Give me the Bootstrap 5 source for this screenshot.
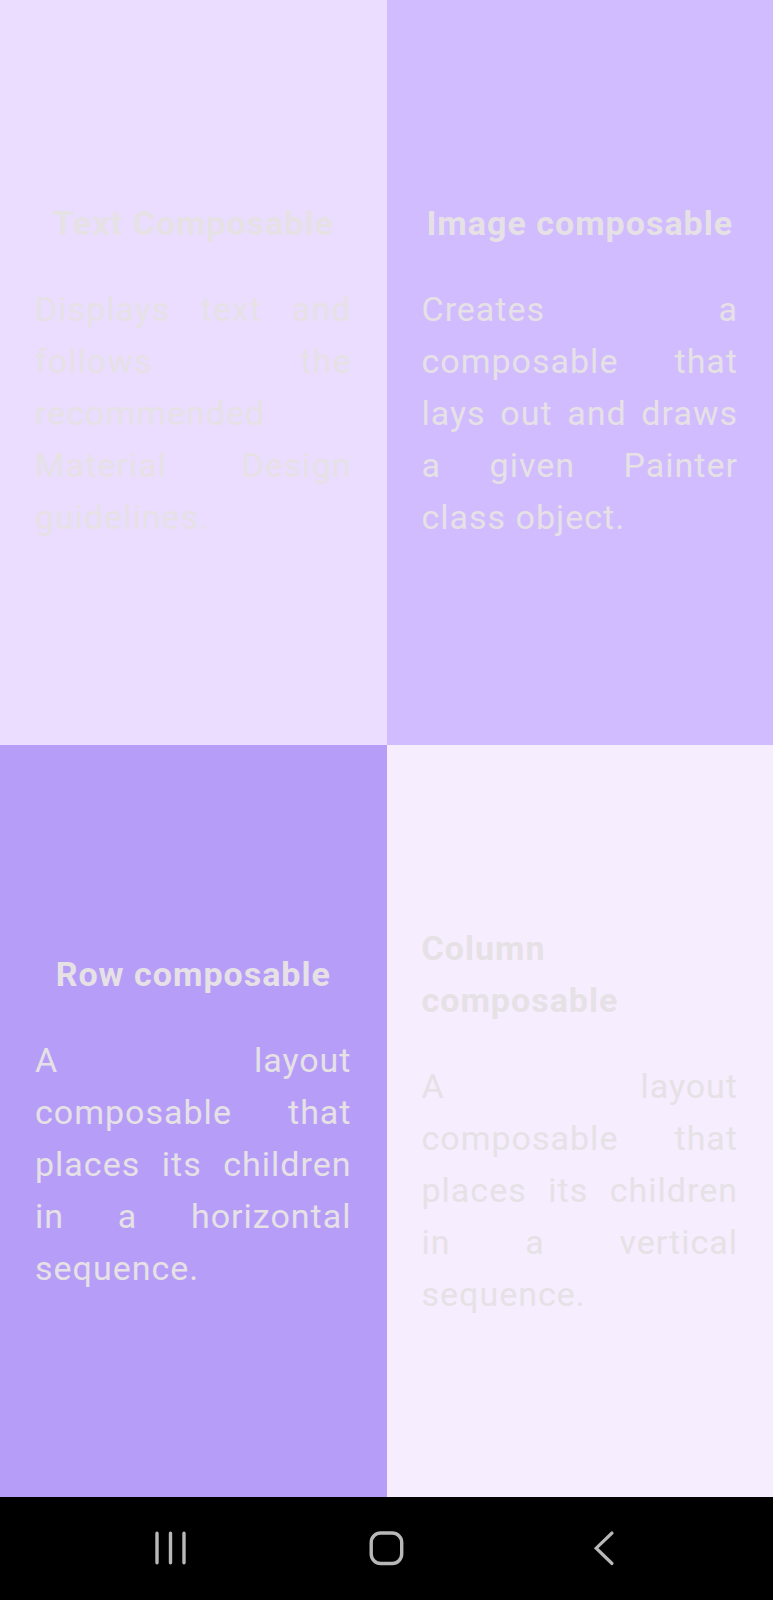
<!DOCTYPE html>
<html lang="en">
<head>
<meta charset="utf-8">
<meta name="viewport" content="width=device-width, initial-scale=1">
<title>Compose Quadrant</title>
<link href="https://cdn.jsdelivr.net/npm/bootstrap@5.3.0/dist/css/bootstrap.min.css" rel="stylesheet">
<style>
  body {
    font-family: Roboto, "Liberation Sans", sans-serif;
    font-size: 34px;
    line-height: 52px;
    letter-spacing: 1px;
    color: #e6e1e5;
    background: #000;
  }
  .quadrants {
    display: grid;
    grid-template-columns: 1fr 1fr;
    grid-template-rows: 1fr 1.01fr;
  }
  .quadrant { padding: 35px; }
  .quadrant h2 {
    font-size: inherit;
    line-height: inherit;
    font-weight: 700;
    margin-bottom: 34px;
  }
  .quadrant p { text-align: justify; }
  .tone-text { background: #eaddff; }
  .tone-image { background: #d0bcff; }
  .tone-text, .tone-image { padding-bottom: 40px; }
  .tone-row { background: #b69df8; }
  .tone-column { background: #f6edff; }
  .system-bar { height: 103px; padding: 0 62px 2px; }
  .system-bar button { color: #b8b8b8; line-height: 1; }
  .system-bar svg { display: block; }
</style>
</head>
<body>
<div class="d-flex flex-column min-vh-100">
  <main class="quadrants flex-grow-1">
    <section class="quadrant tone-text d-flex flex-column justify-content-center align-items-center">
      <h2>Text Composable</h2>
      <p class="w-100 mb-0">Displays text and follows the recommended Material Design guidelines.</p>
    </section>
    <section class="quadrant tone-image d-flex flex-column justify-content-center align-items-center">
      <h2>Image composable</h2>
      <p class="w-100 mb-0">Creates a composable that lays out and draws a given Painter class object.</p>
    </section>
    <section class="quadrant tone-row d-flex flex-column justify-content-center align-items-center">
      <h2>Row composable</h2>
      <p class="w-100 mb-0">A layout composable that places its children in a horizontal sequence.</p>
    </section>
    <section class="quadrant tone-column d-flex flex-column justify-content-center align-items-center">
      <h2>Column composable</h2>
      <p class="w-100 mb-0">A layout composable that places its children in a vertical sequence.</p>
    </section>
  </main>
  <nav class="system-bar d-flex align-items-center bg-black" aria-label="System navigation">
    <button type="button" class="btn border-0 p-0 flex-fill d-flex justify-content-center" aria-label="Recent apps">
      <svg width="36" height="36" viewBox="0 0 36 36" fill="none" stroke="currentColor" stroke-width="3.4" stroke-linecap="round"><path d="M5 3.300v29.500M18.500 3.300v29.500M32 3.300v29.500"/></svg>
    </button>
    <button type="button" class="btn border-0 p-0 flex-fill d-flex justify-content-center" aria-label="Home">
      <svg width="36" height="36" viewBox="0 0 36 36" fill="none" stroke="currentColor" stroke-width="3.4"><rect x="3.200" y="3" width="30.500" height="30.500" rx="9.500"/></svg>
    </button>
    <button type="button" class="btn border-0 p-0 flex-fill d-flex justify-content-center" aria-label="Back">
      <svg width="36" height="36" viewBox="0 0 36 36" fill="none" stroke="currentColor" stroke-width="3.200" stroke-linecap="round"><path d="M27 3L11.200 18.200L27 33.500"/></svg>
    </button>
  </nav>
</div>
<script src="https://cdn.jsdelivr.net/npm/bootstrap@5.3.0/dist/js/bootstrap.bundle.min.js"></script>
</body>
</html>
